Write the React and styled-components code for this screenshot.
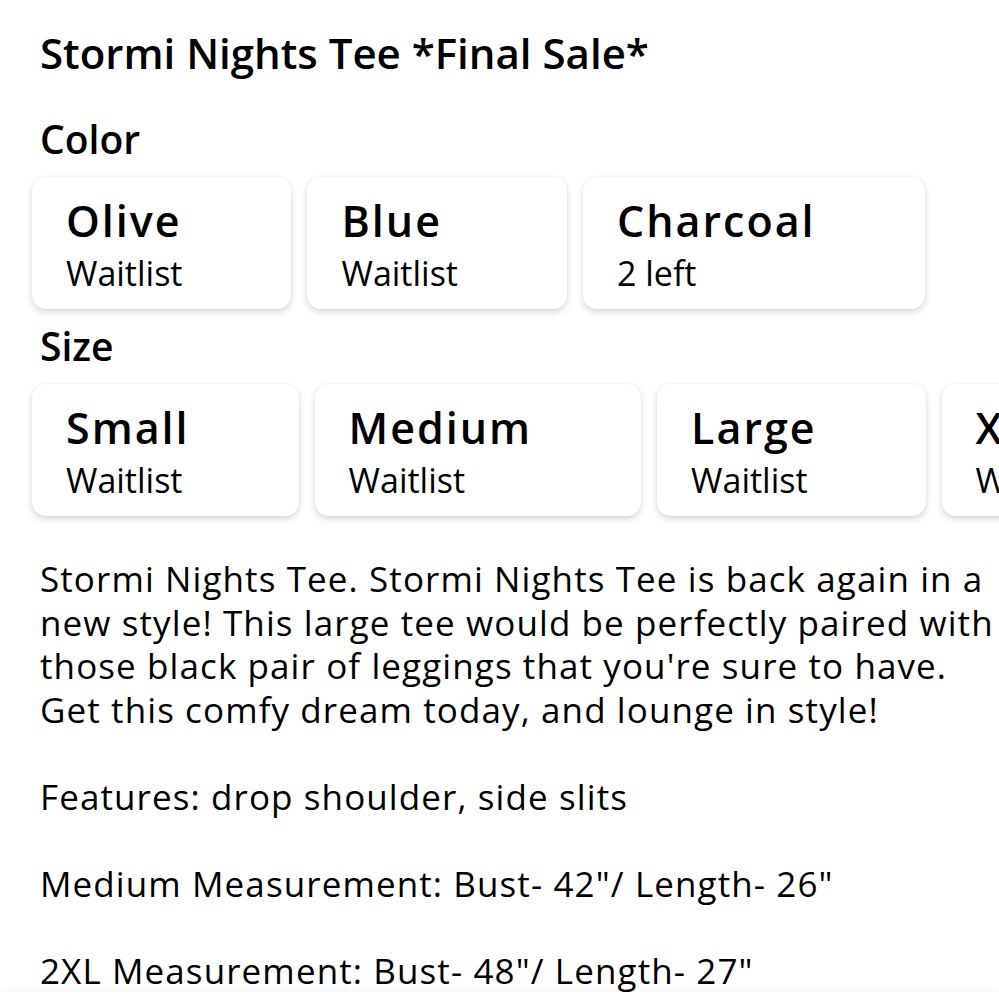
import styled, { createGlobalStyle } from 'styled-components'

const GlobalStyle = createGlobalStyle`
  html, body {
    margin: 0;
    padding: 0;
    background: #fff;
  }
  body {
    font-family: 'Open Sans', 'Noto Sans', sans-serif;
    color: #000;
    overflow: hidden;
  }
`

const colors = [
  { name: 'Olive', stock: 'Waitlist' },
  { name: 'Blue', stock: 'Waitlist' },
  { name: 'Charcoal', stock: '2 left' },
]

const sizes = [
  { name: 'Small', stock: 'Waitlist' },
  { name: 'Medium', stock: 'Waitlist' },
  { name: 'Large', stock: 'Waitlist' },
  { name: 'XL', stock: 'Waitlist' },
  { name: '2XL', stock: 'Waitlist' },
]

// line breaks kept as they fall in the product page
const description = `Stormi Nights Tee. Stormi Nights Tee is back again in a
new style! This large tee would be perfectly paired with
those black pair of leggings that you're sure to have.
Get this comfy dream today, and lounge in style!

Features: drop shoulder, side slits

Medium Measurement: Bust- 42"/ Length- 26"

2XL Measurement: Bust- 48"/ Length- 27"`

function OptionGroup({ label, options }) {
  return (
    <Group>
      <Label>{label}</Label>
      <OptionRow>
        {options.map((option) => (
          <OptionCard key={option.name}>
            <OptionName>{option.name}</OptionName>
            <OptionStock>{option.stock}</OptionStock>
          </OptionCard>
        ))}
      </OptionRow>
    </Group>
  )
}

export default function App() {
  return (
    <>
      <GlobalStyle />
      <Page>
        <Title>Stormi Nights Tee *Final Sale*</Title>
        <OptionGroup label='Color' options={colors} />
        <OptionGroup label='Size' options={sizes} />
        <Description>{description}</Description>
      </Page>
      <BottomBar />
    </>
  )
}

const Page = styled.main`
  width: 999px;
  height: 1000px;
  box-sizing: border-box;
  padding: 28px 0 0 32px;
  overflow: hidden;
`

const Title = styled.h1`
  margin: 0 0 0 8px;
  font-size: 42px;
  font-weight: 600;
  line-height: 50px;
`

const Group = styled.section`
  margin-top: 38px;

  & + & {
    margin-top: 14px;
  }
`

const Label = styled.h2`
  margin: 0 0 15px 8px;
  font-size: 39px;
  font-weight: 600;
  line-height: 46px;
`

const OptionRow = styled.div`
  display: flex;
  gap: 16px;
`

const OptionCard = styled.div`
  flex: none;
  height: 132px;
  box-sizing: border-box;
  padding: 20px 109px 0 34px;
  background: #fff;
  border-radius: 14px;
  box-shadow: 0 3px 7px rgba(0, 0, 0, 0.16), 0 0 2px rgba(0, 0, 0, 0.05);
`

const OptionName = styled.div`
  font-size: 43px;
  font-weight: 600;
  line-height: 48px;
  letter-spacing: 2px;
`

const OptionStock = styled.div`
  margin-top: 8px;
  font-size: 34px;
  font-weight: 400;
  line-height: 40px;
`

const Description = styled.p`
  margin: 41px 0 0 8px;
  font-size: 35px;
  font-weight: 400;
  line-height: 43.6px;
  letter-spacing: 1.1px;
  white-space: pre;
`

const BottomBar = styled.div`
  position: fixed;
  left: 0;
  right: 0;
  bottom: 0;
  height: 8px;
  background: #fff;
  box-shadow: 0 -3px 6px rgba(0, 0, 0, 0.03);
`
